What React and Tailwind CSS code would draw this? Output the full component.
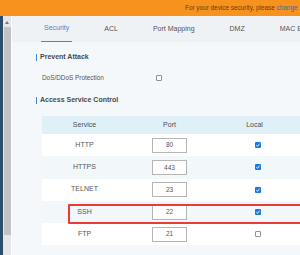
import React from 'react';

const rows = [
  { name: 'HTTP', port: '80', local: true },
  { name: 'HTTPS', port: '443', local: true },
  { name: 'TELNET', port: '23', local: true },
  { name: 'SSH', port: '22', local: true },
  { name: 'FTP', port: '21', local: false },
];

function Check({ on }) {
  if (!on) {
    return <span className="block w-[6px] h-[6px] border border-[#8f8f8f] bg-white rounded-[1px]"></span>;
  }
  return (
    <span className="flex w-[6px] h-[6px] bg-[#1b78e2] rounded-[1px] items-center justify-center">
      <svg width="6" height="6" viewBox="0 0 6 6">
        <path d="M1.3 3.2 L2.5 4.3 L4.7 1.6" stroke="white" strokeWidth="0.9" fill="none" />
      </svg>
    </span>
  );
}

export default function App() {
  return (
    <div className="w-[300px] h-[255px] overflow-hidden bg-[#f5f8fa] flex flex-col font-['Liberation_Sans',Arial,sans-serif] text-[#555]">
      {/* security banner */}
      <div className="h-[16px] shrink-0 bg-[#f7921e] pl-[185px] whitespace-nowrap overflow-hidden text-[6.4px] leading-[16px] text-[#6b3f0c]">
        For your device security, please <span className="text-[#2f6fb3]">change</span>
      </div>

      <div className="flex flex-1 min-h-0">
        {/* sidebar edge + scrollbar */}
        <div className="w-[3px] shrink-0 bg-[#2d4d6d]"></div>
        <div className="w-[8px] shrink-0 bg-[#e6e6e6] flex flex-col items-center">
          <span className="mt-[5px] w-0 h-0 border-l-[2px] border-r-[2px] border-b-[3px] border-l-transparent border-r-transparent border-b-[#777]"></span>
          <div className="mt-[3px] w-[7px] h-[208px] bg-[#c2c2c2]"></div>
        </div>
        <div className="w-[1px] shrink-0 bg-white"></div>

        <main className="flex-1 min-w-0 flex flex-col overflow-hidden">
          {/* tabs */}
          <div className="h-[26px] shrink-0 bg-[#eef2f5] flex items-stretch pl-[29px] gap-[29px] whitespace-nowrap text-[7px]">
            <div className="px-[3px] flex items-center text-[#3d8bcf] border-b border-[#3d8bcf]">Security</div>
            <div className="px-[3px] flex items-center">ACL</div>
            <div className="px-[3px] flex items-center">Port Mapping</div>
            <div className="px-[3px] flex items-center">DMZ</div>
            <div className="px-[3px] flex items-center">MAC Bi</div>
          </div>

          <div className="pl-[24px] flex flex-col items-start">
            <div className="mt-[10px] h-[10px] flex items-center">
              <span className="w-[1px] h-[7px] bg-[#3d8bcf] mr-[3px]"></span>
              <span className="text-[7px] font-bold text-[#4a4a4a]">Prevent Attack</span>
            </div>
            <div className="mt-[11px] h-[10px] flex items-center pl-[6px]">
              <span className="w-[114px] text-[6.4px]">DoS/DDoS Protection</span>
              <Check on={false} />
            </div>
            <div className="mt-[12px] h-[10px] flex items-center">
              <span className="w-[1px] h-[7px] bg-[#3d8bcf] mr-[3px]"></span>
              <span className="text-[7px] font-bold text-[#4a4a4a]">Access Service Control</span>
            </div>

            {/* service table */}
            <div className="relative shrink-0 mt-[11px] ml-[6px] w-[500px] text-[7px]">
              <div className="h-[18px] bg-[#dff0f8] grid grid-cols-[85px_85px_85px_1fr] items-center text-center text-[#4f4f4f]">
                <span>Service</span>
                <span>Port</span>
                <span>Local</span>
                <span></span>
              </div>
              {rows.map((r, i) => (
                <div
                  key={r.name}
                  className={`h-[22.3px] grid grid-cols-[85px_85px_85px_1fr] items-center text-center ${i % 2 ? 'bg-[#f2f8fa]' : 'bg-white'}`}
                >
                  <span>{r.name}</span>
                  <span className="flex justify-center">
                    <span className="w-[35px] h-[15px] border border-[#b5b5b5] bg-white flex items-center justify-center text-[6.5px]">{r.port}</span>
                  </span>
                  <span className="flex justify-center pl-[6px]">
                    <Check on={r.local} />
                  </span>
                  <span></span>
                </div>
              ))}
              <div className="absolute left-[26px] top-[88px] w-[400px] h-[20px] border-2 border-[#ec3b36] rounded-[1px]"></div>
            </div>
          </div>
        </main>
      </div>
    </div>
  );
}
